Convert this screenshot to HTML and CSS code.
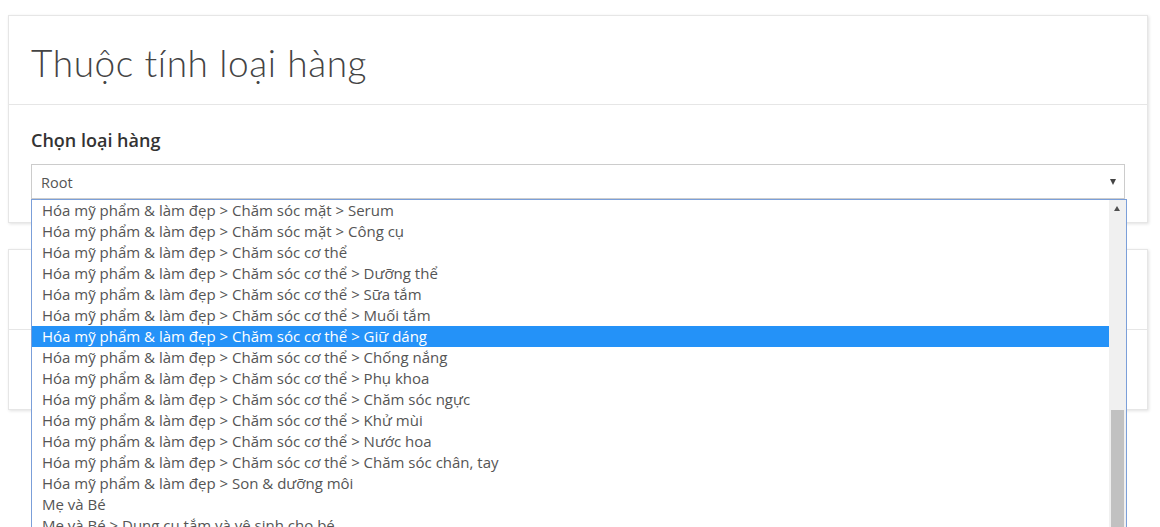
FILE: index.html
```html
<!DOCTYPE html>
<html lang="vi">
<head>
<meta charset="utf-8">
<title>Thuộc tính loại hàng</title>
<link rel="stylesheet" href="styles.css">
</head>
<body>
<div class="page">
  <section class="card card-main">
    <header class="card-head">
      <h1 class="title">Thuộc tính loại hàng</h1>
    </header>
    <div class="card-body">
      <label class="field-label">Chọn loại hàng</label>
      <div class="select-wrap">
        <div class="select">
          <span class="select-value">Root</span>
          <span class="select-arrow"></span>
        </div>
        <div class="dropdown">
          <ul class="options">
            <li class="opt">Hóa mỹ phẩm &amp; làm đẹp &gt; Chăm sóc mặt &gt; Serum</li>
            <li class="opt">Hóa mỹ phẩm &amp; làm đẹp &gt; Chăm sóc mặt &gt; Công cụ</li>
            <li class="opt">Hóa mỹ phẩm &amp; làm đẹp &gt; Chăm sóc cơ thể</li>
            <li class="opt">Hóa mỹ phẩm &amp; làm đẹp &gt; Chăm sóc cơ thể &gt; Dưỡng thể</li>
            <li class="opt">Hóa mỹ phẩm &amp; làm đẹp &gt; Chăm sóc cơ thể &gt; Sữa tắm</li>
            <li class="opt">Hóa mỹ phẩm &amp; làm đẹp &gt; Chăm sóc cơ thể &gt; Muối tắm</li>
            <li class="opt opt-active">Hóa mỹ phẩm &amp; làm đẹp &gt; Chăm sóc cơ thể &gt; Giữ dáng</li>
            <li class="opt">Hóa mỹ phẩm &amp; làm đẹp &gt; Chăm sóc cơ thể &gt; Chống nắng</li>
            <li class="opt">Hóa mỹ phẩm &amp; làm đẹp &gt; Chăm sóc cơ thể &gt; Phụ khoa</li>
            <li class="opt">Hóa mỹ phẩm &amp; làm đẹp &gt; Chăm sóc cơ thể &gt; Chăm sóc ngực</li>
            <li class="opt">Hóa mỹ phẩm &amp; làm đẹp &gt; Chăm sóc cơ thể &gt; Khử mùi</li>
            <li class="opt">Hóa mỹ phẩm &amp; làm đẹp &gt; Chăm sóc cơ thể &gt; Nước hoa</li>
            <li class="opt">Hóa mỹ phẩm &amp; làm đẹp &gt; Chăm sóc cơ thể &gt; Chăm sóc chân, tay</li>
            <li class="opt">Hóa mỹ phẩm &amp; làm đẹp &gt; Son &amp; dưỡng môi</li>
            <li class="opt">Mẹ và Bé</li>
            <li class="opt">Mẹ và Bé &gt; Dụng cụ tắm và vệ sinh cho bé</li>
          </ul>
          <div class="scrollbar">
            <span class="scroll-up"></span>
            <span class="scroll-thumb"></span>
          </div>
        </div>
      </div>
    </div>
  </section>

  <section class="card card-second">
    <header class="card-head card-head-second"></header>
    <div class="card-body card-body-second"></div>
  </section>
</div>
</body>
</html>
```

FILE: styles.css
```css
html, body {
  margin: 0;
  padding: 0;
  background: #ffffff;
  overflow: hidden;
  height: 527px;
}

body {
  font-family: "Open Sans", "Noto Sans", sans-serif;
  color: #555555;
}

.page {
  padding: 15px 12px 0 8px;
  display: flex;
  flex-direction: column;
  gap: 26px;
}

.card {
  background: #ffffff;
  border: 1px solid #e6e6e6;
  box-shadow: 1px 1px 3px rgba(0, 0, 0, 0.12);
  display: flex;
  flex-direction: column;
}

.card-head {
  height: 89px;
  border-bottom: 1px solid #e6e6e6;
  padding: 0 22px;
  display: flex;
  align-items: center;
  box-sizing: border-box;
}

.title {
  margin: 0;
  font-family: "Lato", "Open Sans", sans-serif;
  font-weight: 300;
  font-size: 37px;
  letter-spacing: 0.6px;
  color: #444444;
  line-height: 1;
  padding-top: 4px;
}

.card-body {
  padding: 22px 22px 23px 22px;
  display: flex;
  flex-direction: column;
}

.field-label {
  font-family: "Open Sans", sans-serif;
  font-weight: 600;
  font-size: 18px;
  color: #333333;
  line-height: 26px;
  margin-bottom: 11px;
}

.select-wrap {
  position: relative;
}

.select {
  height: 35px;
  border: 1px solid #cccccc;
  box-sizing: border-box;
  display: flex;
  align-items: center;
  justify-content: space-between;
  padding: 0 8px 0 9px;
  font-size: 14.5px;
  color: #555555;
}

.select-value {
  line-height: 20px;
  padding-top: 2px;
}

.select-arrow {
  width: 0;
  height: 0;
  border-left: 3.5px solid transparent;
  border-right: 3.5px solid transparent;
  border-top: 6px solid #444444;
  margin-top: 1px;
}

.dropdown {
  position: absolute;
  top: 35px;
  left: 0;
  width: 1096px;
  height: 336px;
  background: #ffffff;
  border: 1px solid #7b9fd9;
  box-sizing: border-box;
  display: flex;
  z-index: 10;
}

.options {
  list-style: none;
  margin: 0;
  padding: 0;
  flex: 1;
  overflow: hidden;
}

.opt {
  height: 21px;
  line-height: 21px;
  padding-left: 10px;
  font-size: 15px;
  color: #555555;
  white-space: nowrap;
}

.opt-active {
  background: #2492f8;
  color: #ffffff;
}

.scrollbar {
  width: 17px;
  background: #f0f0f0;
  position: relative;
  flex: none;
}

.scroll-up {
  position: absolute;
  top: 6px;
  left: 5px;
  width: 0;
  height: 0;
  border-left: 3.5px solid transparent;
  border-right: 3.5px solid transparent;
  border-bottom: 5px solid #505050;
}

.scroll-thumb {
  position: absolute;
  top: 210px;
  left: 2px;
  width: 13px;
  height: 130px;
  background: #c1c1c1;
}

.card-head-second {
  height: 80px;
}

.card-body-second {
  height: 79px;
  padding: 0;
  box-sizing: border-box;
}
```
